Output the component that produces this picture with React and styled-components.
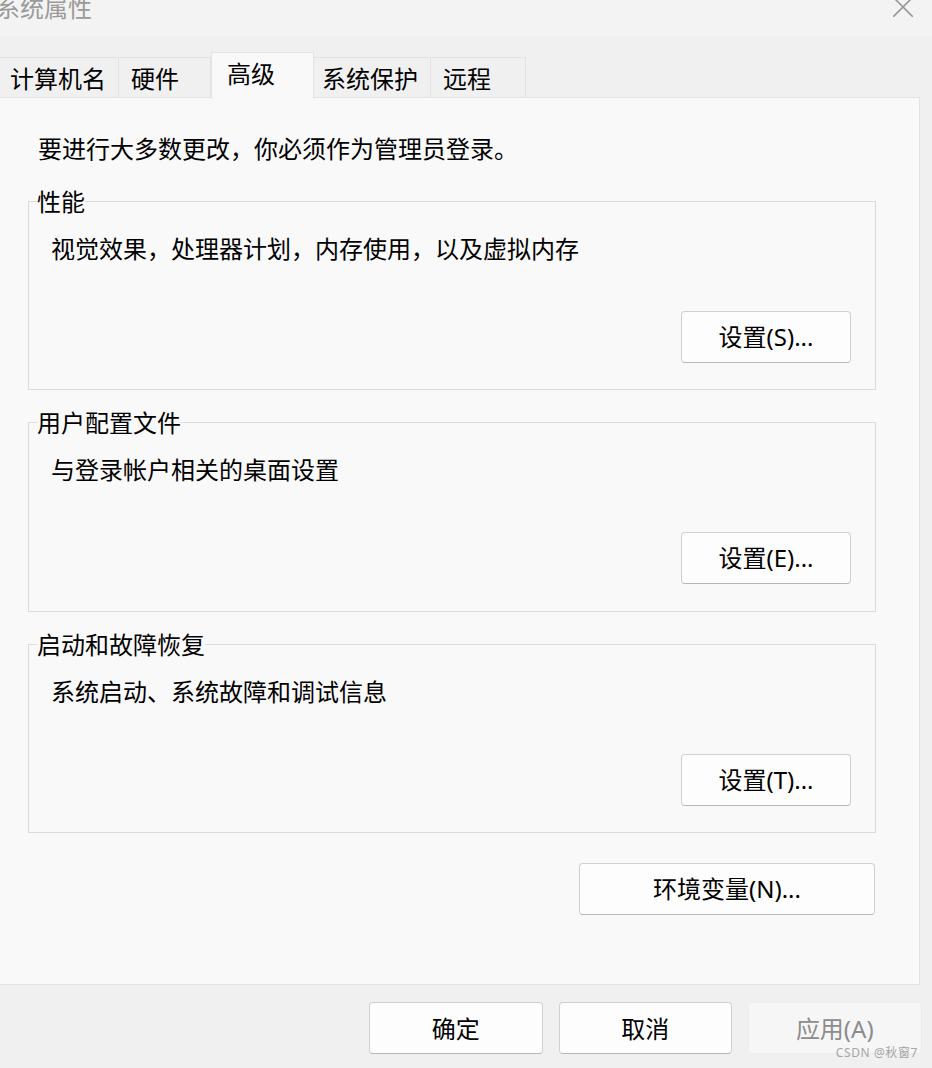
import React from "react";
import styled, {createGlobalStyle} from "styled-components";

const tabs = [
    {label: "计算机名", width: 119, pad: 10},
    {label: "硬件", width: 92, pad: 12},
    {label: "高级", width: 103, pad: 15, active: true},
    {label: "系统保护", width: 117, pad: 8},
    {label: "远程", width: 95, pad: 12},
]

const groups = [
    {title: "性能", text: "视觉效果，处理器计划，内存使用，以及虚拟内存", button: "设置(S)...", height: 189},
    {title: "用户配置文件", text: "与登录帐户相关的桌面设置", button: "设置(E)...", height: 190, legendLeft: 8},
    {title: "启动和故障恢复", text: "系统启动、系统故障和调试信息", button: "设置(T)...", height: 189, legendLeft: 8},
]

const App = () => {
    return (
        <Wrapper>
            <GlobalStyle/>
            <TitleBar>
                <Title>系统属性</Title>
                <CloseIcon viewBox="0 0 20 20">
                    <path d="M0 0L20 20M20 0L0 20" stroke="#999" strokeWidth="1.6" fill="none"/>
                </CloseIcon>
            </TitleBar>
            <TabStrip>
                {tabs.map((tab) => (
                    <Tab key={tab.label} $width={tab.width} $pad={tab.pad} $active={tab.active}>
                        {tab.label}
                    </Tab>
                ))}
            </TabStrip>
            <Panel>
                <Notice>要进行大多数更改，你必须作为管理员登录。</Notice>
                <Groups>
                    {groups.map((group) => (
                        <Group key={group.title} $height={group.height}>
                            <Legend $left={group.legendLeft}>{group.title}</Legend>
                            <Description>{group.text}</Description>
                            <GroupButton>{group.button}</GroupButton>
                        </Group>
                    ))}
                </Groups>
                <EnvRow>
                    <EnvButton>环境变量(N)...</EnvButton>
                </EnvRow>
            </Panel>
            <Footer>
                <DialogButton>确定</DialogButton>
                <DialogButton>取消</DialogButton>
                <DialogButton disabled>应用(A)</DialogButton>
            </Footer>
            <Watermark>CSDN @秋窗7</Watermark>
        </Wrapper>
    )
}

const GlobalStyle = createGlobalStyle`
  html, body {
    margin: 0;
    padding: 0;
    background: #f0f0f0;
  }
  * {
    box-sizing: border-box;
  }
`

const Wrapper = styled.div`
  position: relative;
  width: 932px;
  height: 1068px;
  overflow: hidden;
  background: #f0f0f0;
  color: #000;
  font-family: "Noto Sans", "Noto Sans CJK SC", sans-serif;
  font-size: 24px;
`

const TitleBar = styled.div`
  height: 36px;
  background: #f3f3f3;
  display: flex;
  justify-content: space-between;
  align-items: flex-start;
  padding-right: 19px;
`

const Title = styled.div`
  margin-top: -8px;
  margin-left: -4px;
  line-height: 32px;
  color: #9a9a9a;
`

const CloseIcon = styled.svg`
  width: 20px;
  height: 20px;
  margin-top: -3px;
`

const TabStrip = styled.div`
  height: 62px;
  display: flex;
  align-items: flex-end;
`

const Tab = styled.div`
  position: relative;
  z-index: ${p => p.$active ? 1 : 0};
  width: ${p => p.$width}px;
  height: ${p => p.$active ? 47 : 41}px;
  margin-bottom: ${p => p.$active ? -1 : 0}px;
  padding-left: ${p => p.$pad}px;
  line-height: 42px;
  background: ${p => p.$active ? "#f9f9f9" : "#f0f0f0"};
  border: 1px solid #e3e3e3;
  border-bottom: ${p => p.$active ? "none" : "1px solid #e3e3e3"};
  border-left-width: ${p => p.$active ? 1 : 0}px;
`

const Panel = styled.div`
  width: 920px;
  height: 888px;
  margin-top: -1px;
  padding: 35px 0 0 28px;
  background: #f9f9f9;
  border: 1px solid #e3e3e3;
  border-left: none;
`

const Notice = styled.div`
  padding-left: 10px;
  line-height: 32px;
`

const Groups = styled.div`
  display: flex;
  flex-direction: column;
  gap: 32px;
  margin-top: 36px;
`

const Group = styled.div`
  position: relative;
  width: 848px;
  height: ${p => p.$height}px;
  padding: 31px 24px 0 22px;
  border: 1px solid #dcdcdc;
  display: flex;
  flex-direction: column;
`

const Legend = styled.div`
  position: absolute;
  top: -14px;
  left: ${p => p.$left ?? 8}px;
  line-height: 28px;
  background: #f9f9f9;
`

const Description = styled.div`
  line-height: 32px;
`

const Button = styled.button`
  height: 52px;
  padding: 0 0 4px;
  font: inherit;
  color: #000;
  background: #fdfdfd;
  border: 1px solid #d0d0d0;
  border-bottom-color: #b8b8b8;
  border-radius: 4px;
`

const GroupButton = styled(Button)`
  width: 170px;
  margin-top: 46px;
  align-self: flex-end;
`

const EnvRow = styled.div`
  display: flex;
  justify-content: flex-end;
  width: 847px;
  margin-top: 30px;
`

const EnvButton = styled(Button)`
  width: 296px;
`

const Footer = styled.div`
  display: flex;
  gap: 16px;
  padding: 17px 0 0 369px;
`

const DialogButton = styled(Button)`
  width: 173.5px;
  padding: 0 0 2px;

  &:disabled {
    color: #8c8c8c;
    background: #f6f6f6;
    border-color: #ececec;
  }
`

const Watermark = styled.div`
  position: absolute;
  right: 14px;
  bottom: 7px;
  font-size: 12px;
  line-height: 16px;
  letter-spacing: 0.6px;
  color: #a6a6a6;
`

export default App;
